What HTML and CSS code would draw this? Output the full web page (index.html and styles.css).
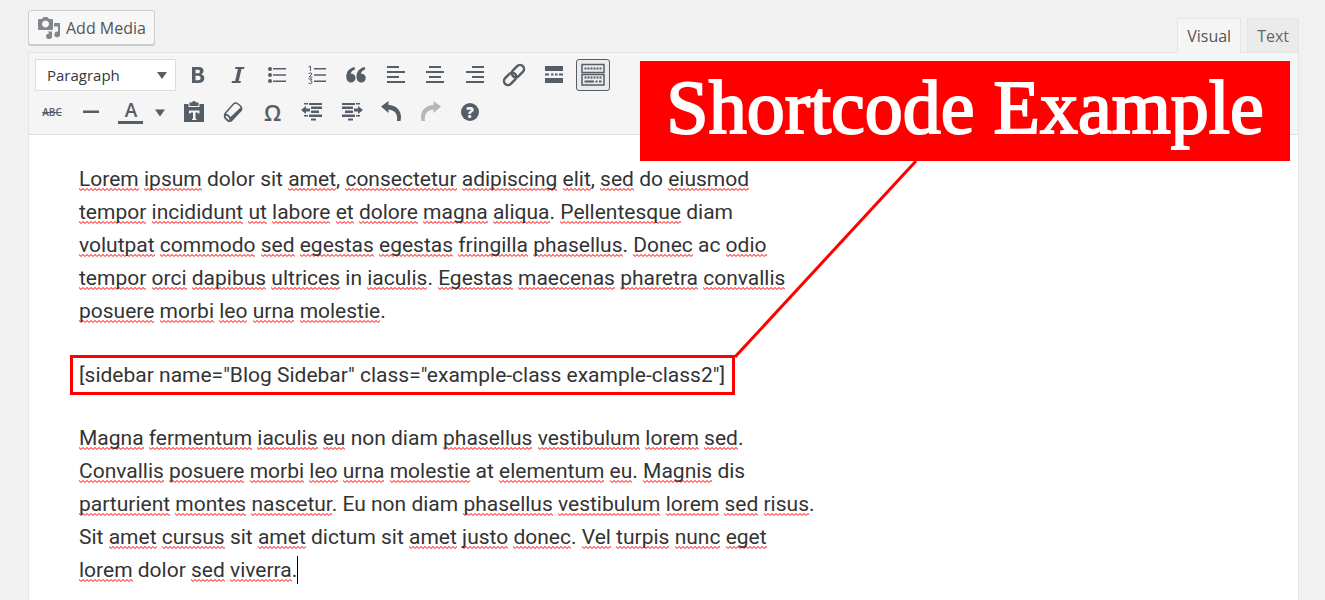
FILE: index.html
```html
<!DOCTYPE html>
<html lang="en">
<head>
    <meta charset="UTF-8">
    <meta name="viewport" content="width=device-width, initial-scale=1.0">
    <title>Shortcode Example</title>
    <link rel="stylesheet" href="styles.css">
</head>
<body>

<div class="editor-wrap">
    <div class="editor-tools">
        <button type="button" class="add-media">
            <svg width="22" height="22" viewBox="0 0 22 22" fill="#82878c" aria-hidden="true">
                <path fill-rule="evenodd" d="M1 2h3l1.500-2h4L11 2h3q1 0 1 1v9q0 1-1 1H1q-1 0-1-1V3q0-1 1-1zM7.500 3.500a3.500 3.500 0 1 0 .010 0z"/>
                <path d="M16 6h6v11.500a2.800 2.800 0 1 1-2-2.700V9.500h-4z"/>
                <path d="M9.500 14.500h4.500v4.500a3 2.800 0 1 1-2.500-2.500z"/>
            </svg>
            Add Media
        </button>
        <div class="editor-tabs">
            <button type="button" class="tab tab-active">Visual</button>
            <button type="button" class="tab">Text</button>
        </div>
    </div>

    <div class="editor">
        <div class="toolbar">
            <div class="toolbar-row">
                <select class="format-select" aria-label="Format">
                    <option>Paragraph</option>
                    <option>Heading 1</option>
                    <option>Heading 2</option>
                </select>
                <button type="button" class="tool" aria-label="Bold">
                    <svg viewBox="0 0 24 24"><path fill-rule="evenodd" d="M6 4h6.500c3.500 0 5 1.500 5 3.800 0 1.900-1 3-2.500 3.500 2.200.5 3.300 1.900 3.300 4 0 3-2.300 4.700-5.800 4.700H6zM9.500 6.700v3.500h2.300c1.500 0 2.200-.6 2.200-1.800s-.8-1.700-2.200-1.700zM9.500 12.800v4.400h2.700c1.600 0 2.400-.7 2.400-2.200s-.9-2.200-2.500-2.200z"/></svg>
                </button>
                <button type="button" class="tool" aria-label="Italic">
                    <svg viewBox="0 0 24 24"><path d="M9.500 4H18.500l-.5 2h-2.500L12.700 18h2.300l-.6 2H5.500l.6-2h3L11.900 6H9z"/></svg>
                </button>
                <button type="button" class="tool" aria-label="Bulleted list">
                    <svg viewBox="0 0 24 24"><circle cx="5" cy="6" r="2"/><circle cx="5" cy="12" r="2"/><circle cx="5" cy="18" r="2"/><path d="M8 5h13v1.600H8zM8 11.200h13v1.600H8zM8 17.400h13V19H8z"/></svg>
                </button>
                <button type="button" class="tool" aria-label="Numbered list">
                    <svg viewBox="0 0 24 24"><path d="M9 5h12v1.600H9zM9 11.200h12v1.600H9zM9 17.400h12V19H9z"/><path class="line thin" d="M3.500 4.200l2-1.200V8M3.500 10.500q3.500-1.500 3.500.5l-3 3h3.500M3.500 16h3.500l-1.500 1.800q2 .2 1.500 1.900-1 1.500-3.500.5"/></svg>
                </button>
                <button type="button" class="tool" aria-label="Blockquote">
                    <svg viewBox="0 0 24 24"><path d="M10.500 4C5.500 5 2.300 8.500 2.300 13.500c0 3.700 1.900 6 4.700 6 2.500 0 4.500-1.900 4.500-4.500s-1.700-4.300-4-4.300c-.4 0-.6 0-.8.100.4-2 1.600-3.600 4.300-4.400zM20.700 4c-5 1-8.200 4.500-8.200 9.500 0 3.700 1.900 6 4.700 6 2.500 0 4.500-1.900 4.500-4.500s-1.700-4.300-4-4.300c-.4 0-.6 0-.8.100.4-2 1.600-3.600 4.300-4.400z"/></svg>
                </button>
                <button type="button" class="tool" aria-label="Align left">
                    <svg viewBox="0 0 24 24"><path d="M3 3h12v2H3zM3 8h18v2H3zM3 13h12v2H3zM3 18h18v2H3z"/></svg>
                </button>
                <button type="button" class="tool" aria-label="Align center">
                    <svg viewBox="0 0 24 24"><path d="M6 3h12v2H6zM3 8h18v2H3zM6 13h12v2H6zM3 18h18v2H3z"/></svg>
                </button>
                <button type="button" class="tool" aria-label="Align right">
                    <svg viewBox="0 0 24 24"><path d="M9 3h12v2H9zM3 8h18v2H3zM9 13h12v2H9zM3 18h18v2H3z"/></svg>
                </button>
                <button type="button" class="tool" aria-label="Insert link">
                    <svg viewBox="0 0 24 24"><g class="line link" transform="rotate(-45 12 12)"><rect x="-0.500" y="8" width="14" height="8" rx="4"/><rect x="10.500" y="8" width="14" height="8" rx="4"/></g></svg>
                </button>
                <button type="button" class="tool" aria-label="Read more">
                    <svg viewBox="0 0 24 24"><path d="M3 3h18v5H3zM3 15h18v5H3zM3 10.500h4v2H3zM9 10.500h2.500v2H9zM13 10.500h2.500v2H13zM17 10.500h4v2h-4z"/></svg>
                </button>
                <button type="button" class="tool tool-active" aria-label="Toolbar toggle">
                    <svg viewBox="0 0 24 24"><g class="line mid"><rect x="1" y="1.500" width="22" height="8"/><rect x="1" y="11.500" width="22" height="10.500"/></g><path class="line dash" d="M3.500 5.500h17M3.500 14.500h17"/><path d="M3.500 17.500h9.500v2H3.500zM14.500 17.500h2v2h-2zM18 17.500h2.500v2H18z"/></svg>
                </button>
            </div>
            <div class="toolbar-row toolbar-row-short">
                <button type="button" class="tool strike" aria-label="Strikethrough"><s>ABC</s></button>
                <button type="button" class="tool" aria-label="Horizontal line">
                    <svg viewBox="0 0 24 24"><path d="M4 10.500h16V13H4z"/></svg>
                </button>
                <button type="button" class="tool text-color" aria-label="Text color"><span>A</span></button>
                <button type="button" class="tool caret" aria-label="Choose text color">
                    <svg viewBox="0 0 24 24"><path d="M5 9.500h10l-5 7z"/></svg>
                </button>
                <button type="button" class="tool" aria-label="Paste as text">
                    <svg viewBox="0 0 24 24"><path fill-rule="evenodd" d="M2 4h4.500v3h11V4H22v18H2zM7 10.500v3h1.500l.5-1h2v6l-1 .5v1h4.500v-1l-1-.5v-6h2l.5 1h1.500v-3z"/><path d="M7.500 2.500H10Q10 1 12 1t2 1.500h2.500V6h-9z"/></svg>
                </button>
                <button type="button" class="tool" aria-label="Clear formatting">
                    <svg viewBox="0 0 24 24"><path class="line mid" d="M12.500 4Q14.500 2 17 4l2.500 2Q21.500 8 20 10.500L11 20q-2 2-4.500 0l-2-2q-2-2 0-5z"/><path d="M4 13.500q3.500 0 5.500 3.500l10-9.500 1.500 2L10.500 21.500l-3.500.500-4-4z"/><path d="M5 15.500q2.500.500 3.500 3.500l-1 1-3-3z" fill="#f5f5f5"/></svg>
                </button>
                <button type="button" class="tool omega" aria-label="Special character">Ω</button>
                <button type="button" class="tool" aria-label="Decrease indent">
                    <svg viewBox="0 0 24 24"><path d="M4 3h4v1.500H4zM9 3h13v2H9zM11 6.500h11v2.500H11zM11 10.500h8V13h-8zM9 14.500h13V17H9zM4 15h4v1.500H4zM11 18.500h5v2h-5zM1 10l5-4v2.500h4v3H6V14z"/></svg>
                </button>
                <button type="button" class="tool" aria-label="Increase indent">
                    <svg viewBox="0 0 24 24"><path d="M16 3h4v1.500h-4zM2 3h13v2H2zM2 6.500h11v2.500H2zM5 10.500h8V13H5zM2 14.500h13V17H2zM16 15h4v1.500h-4zM8 18.500h5v2H8zM23 10l-5-4v2.500h-4v3h4V14z"/></svg>
                </button>
                <button type="button" class="tool" aria-label="Undo">
                    <svg viewBox="0 0 24 24"><path d="M2 6.500L9.500 1v4C17 5 22 10 22 17l-.5 4H18c1-6-1.500-11-8.500-11.500V13z"/></svg>
                </button>
                <button type="button" class="tool" aria-label="Redo" disabled>
                    <svg viewBox="0 0 24 24"><path d="M22 6.500L14.500 1v4C7 5 2 10 2 17l.5 4H6c-1-6 1.500-11 8.500-11.500V13z"/></svg>
                </button>
                <button type="button" class="tool help" aria-label="Keyboard shortcuts"><span>?</span></button>
            </div>
        </div>

        <div class="content">
            <p>
                <u>Lorem</u> <u>ipsum</u> dolor sit <u>amet</u>, <u>consectetur</u> <u>adipiscing</u> <u>elit</u>, <u>sed</u> do <u>eiusmod</u><br>
                <u>tempor</u> <u>incididunt</u> <u>ut</u> <u>labore</u> <u>et</u> <u>dolore</u> <u>magna</u> <u>aliqua</u>. <u>Pellentesque</u> diam<br>
                <u>volutpat</u> <u>commodo</u> <u>sed</u> <u>egestas</u> <u>egestas</u> <u>fringilla</u> <u>phasellus</u>. <u>Donec</u> ac <u>odio</u><br>
                <u>tempor</u> <u>orci</u> <u>dapibus</u> <u>ultrices</u> in <u>iaculis</u>. <u>Egestas</u> <u>maecenas</u> <u>pharetra</u> <u>convallis</u><br>
                <u>posuere</u> <u>morbi</u> <u>leo</u> <u>urna</u> <u>molestie</u>.
            </p>
            <p class="shortcode">[sidebar name="Blog Sidebar" class="example-class example-class2"]</p>
            <p>
                <u>Magna</u> <u>fermentum</u> <u>iaculis</u> <u>eu</u> non diam <u>phasellus</u> <u>vestibulum</u> <u>lorem</u> <u>sed</u>.<br>
                <u>Convallis</u> <u>posuere</u> <u>morbi</u> <u>leo</u> <u>urna</u> <u>molestie</u> at <u>elementum</u> <u>eu</u>. <u>Magnis</u> dis<br>
                <u>parturient</u> <u>montes</u> <u>nascetur</u>. Eu non diam <u>phasellus</u> <u>vestibulum</u> <u>lorem</u> <u>sed</u> <u>risus</u>.<br>
                Sit <u>amet</u> <u>cursus</u> sit <u>amet</u> dictum sit <u>amet</u> <u>justo</u> <u>donec</u>. <u>Vel</u> <u>turpis</u> <u>nunc</u> <u>eget</u><br>
                <u>lorem</u> dolor <u>sed</u> <u>viverra</u>.<span class="cursor"></span>
            </p>
        </div>
    </div>
</div>

<div class="callout">
    <h1>Shortcode Example</h1>
    <svg class="callout-line" width="184" height="197" viewBox="0 0 184 197" aria-hidden="true"><path d="M182 0L1 196"/></svg>
</div>

</body>
</html>
```
FILE: styles.css
```css
body {
    margin: 0;
    background-color: #f1f1f1;
    font-family: "Open Sans", sans-serif;
    color: #555;
}
button,
select {
    font-family: inherit;
    color: inherit;
}
.editor-wrap {
    padding: 10px 26px 0 28px;
}
.editor-tools {
    display: flex;
    justify-content: space-between;
    align-items: flex-start;
    height: 42px;
}
.add-media {
    display: flex;
    align-items: center;
    gap: 6px;
    height: 35px;
    padding: 0 8px 0 9px;
    border: 1px solid #ccc;
    border-radius: 3px;
    background-color: #f7f7f7;
    box-shadow: 0 1px 0 #ccc;
    font-size: 16px;
}
.editor-tabs {
    display: flex;
    gap: 6px;
    padding-top: 8px;
}
.tab {
    height: 35px;
    padding: 0 9px;
    border: 1px solid #e5e5e5;
    background-color: #ebebeb;
    color: #666;
    font-size: 16px;
}
.tab-active {
    border-bottom-color: #f5f5f5;
    background-color: #f5f5f5;
    color: #555;
}
.editor {
    border: 1px solid #e5e5e5;
    border-bottom: 0;
    background-color: #fff;
    min-height: 548px;
    box-sizing: border-box;
}
.toolbar {
    padding: 4px 6px;
    border-bottom: 1px solid #ddd;
    background-color: #f5f5f5;
}
.toolbar-row {
    display: flex;
    align-items: center;
    justify-content: space-between;
    max-width: 575px;
    height: 36px;
}
.toolbar-row-short {
    max-width: 452px;
    padding-top: 1px;
}
.format-select {
    appearance: none;
    width: 141px;
    height: 32px;
    padding: 0 11px;
    border: 1px solid #ddd;
    border-radius: 0;
    background: #fff url("data:image/svg+xml,%3Csvg xmlns='http://www.w3.org/2000/svg' width='10' height='7'%3E%3Cpath d='M0 0h10L5 7z' fill='%23555d66'/%3E%3C/svg%3E") no-repeat right 8px center;
    color: #32373c;
    font-size: 15px;
}
.tool {
    display: flex;
    align-items: center;
    justify-content: center;
    box-sizing: border-box;
    width: 34px;
    height: 32px;
    padding: 0;
    border: 1px solid transparent;
    border-radius: 3px;
    background: none;
    color: #555d66;
}
.tool svg {
    flex-shrink: 0;
    width: 24px;
    height: 24px;
    fill: #555d66;
}
.tool:disabled {
    opacity: 0.4;
}
.tool .line {
    fill: none;
    stroke: #555d66;
    stroke-width: 2;
}
.tool .thin {
    stroke-width: 1;
}
.tool .mid {
    stroke-width: 1.5;
}
.tool .link {
    stroke-width: 2.5;
}
.tool .dash {
    stroke-dasharray: 2 1;
}
.tool-active {
    border-color: #555d66;
    background-color: #ebebeb;
}
.strike {
    font-size: 10px;
    font-weight: 600;
}
.text-color span {
    width: 25px;
    border-bottom: 3px solid #555d66;
    font-size: 19px;
    font-weight: 600;
    line-height: 21px;
}
.caret {
    width: 18px;
}
.omega {
    font-size: 22px;
    font-weight: 600;
}
.help span {
    width: 18px;
    border-radius: 50%;
    background-color: #555d66;
    color: #f5f5f5;
    font-size: 15px;
    font-weight: 800;
    line-height: 18px;
}
.content {
    max-width: 760px;
    padding: 28px 50px 0;
    color: #333;
    font-family: Roboto, "Liberation Sans", sans-serif;
    font-size: 21px;
    line-height: 33px;
}
.content p {
    margin: 0 0 30px;
}
.content p:last-child {
    margin-bottom: 0;
}
.content u {
    background: url("data:image/svg+xml,%3Csvg xmlns='http://www.w3.org/2000/svg' width='4' height='3'%3E%3Cpath d='M-1 -.5L2 2.500 5-.5' fill='none' stroke='%23f00'/%3E%3C/svg%3E") repeat-x left bottom;
    text-decoration: none;
}
.content .shortcode {
    width: fit-content;
    margin: -3px -9px 27px;
    padding: 1px 7px 0 6px;
    border: 3px solid #f00;
}
.cursor {
    border-left: 1px solid #000;
    padding: 2px 0;
}

/* Callout over the editor */
.callout {
    position: absolute;
    top: 61px;
    right: 35px;
    width: 650px;
    background-color: #f00;
}
.callout h1 {
    margin: 0;
    padding-bottom: 8px;
    color: #fff;
    font-family: "Liberation Serif", "Times New Roman", serif;
    font-size: 76px;
    font-weight: 400;
    line-height: 92px;
    text-align: center;
    -webkit-text-stroke: 2px #fff;
}
.callout-line {
    position: absolute;
    top: 100px;
    left: 94px;
    fill: none;
    stroke: #f00;
    stroke-width: 3;
}
```
